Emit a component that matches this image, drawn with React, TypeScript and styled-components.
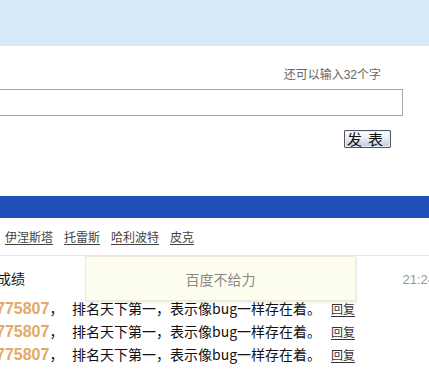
import React from "react";
import styled, { createGlobalStyle } from "styled-components";

const GlobalStyle = createGlobalStyle`
  html, body {
    margin: 0;
    padding: 0;
    background: #ffffff;
    overflow: hidden;
  }
  body {
    font-family: "Liberation Sans", Arial, "Noto Sans CJK SC", sans-serif;
    color: #222;
  }
`;

const Page = styled.div`
  width: 429px;
  height: 370px;
  overflow: hidden;
  display: flex;
  flex-direction: column;
`;

const Header = styled.div`
  height: 46px;
  background: #d6e9f8;
  flex: none;
`;

const Compose = styled.div`
  display: flex;
  flex-direction: column;
  align-items: flex-end;
  padding-top: 21px;
`;

const Counter = styled.div`
  font-size: 12px;
  line-height: 16px;
  color: #666;
  margin-right: 48px;
  font-family: "Liberation Sans", "Noto Sans CJK SC", sans-serif;
`;

const InputBox = styled.div`
  align-self: stretch;
  margin-top: 6px;
  margin-right: 26px;
  height: 25px;
  border: 1px solid #a8a8a8;
  border-left: none;
  background: #fff;
`;

const PostButton = styled.button`
  margin-top: 14px;
  margin-right: 38px;
  width: 47px;
  height: 18px;
  padding: 0 0 0 2px;
  display: flex;
  align-items: center;
  justify-content: flex-start;
  gap: 6px;
  border: 1px solid #4d5866;
  border-radius: 1px;
  background: linear-gradient(#ffffff 0%, #edf1f8 40%, #bccbe2 100%);
  font-family: "Noto Sans CJK SC", sans-serif;
  font-size: 15px;
  line-height: 16px;
  color: #111;
  white-space: nowrap;
  box-shadow: inset 0 0 0 1px #e8edf6;
`;

const BlueBar = styled.div`
  margin-top: 48px;
  height: 22px;
  background: #2250bb;
  flex: none;
`;

const HotLinks = styled.div`
  display: flex;
  gap: 11px;
  padding: 11px 0 10px 5px;
  border-bottom: 1px solid #e8e8e8;
`;

const HotLink = styled.a`
  font-family: "Noto Sans CJK SC", sans-serif;
  font-size: 12px;
  line-height: 16px;
  color: #444;
  text-decoration: underline;
  text-underline-offset: 2px;
`;

const List = styled.div`
  position: relative;
  padding-top: 11px;
`;

const TitleRow = styled.div`
  display: flex;
  justify-content: space-between;
  align-items: baseline;
  margin-left: -3px;
  margin-right: -6px;
`;

const Title = styled.span`
  font-family: "Noto Sans CJK SC", sans-serif;
  font-size: 14px;
  line-height: 22px;
  color: #111;
`;

const Time = styled.span`
  font-size: 13px;
  color: #999;
`;

const Rows = styled.div`
  margin-top: 8px;
  display: flex;
  flex-direction: column;
`;

const Row = styled.div`
  display: grid;
  grid-template-columns: 72px 259px auto;
  align-items: baseline;
  line-height: 22px;
`;

const Who = styled.span`
  margin-left: -4px;
  white-space: nowrap;
`;

const Num = styled.span`
  font-size: 16px;
  font-weight: bold;
  color: #e4a867;
`;

const Comma = styled.span`
  font-family: "Noto Sans CJK SC", sans-serif;
  font-size: 14px;
  color: #111;
`;

const Msg = styled.span`
  font-family: "Noto Sans CJK SC", sans-serif;
  font-size: 14px;
  color: #111;
  white-space: nowrap;
`;

const Reply = styled.a`
  font-family: "Noto Sans CJK SC", sans-serif;
  font-size: 12px;
  color: #333;
  text-decoration: underline;
  text-underline-offset: 2px;
`;

const Tip = styled.div`
  position: absolute;
  left: 85px;
  top: 0;
  width: 269px;
  height: 43px;
  background: #fdfdf0;
  border: 1px solid #ecebdb;
  box-shadow: 1px 2px 2px rgba(0, 0, 0, 0.08);
  display: flex;
  align-items: center;
  justify-content: center;
  font-family: "Noto Sans CJK SC", sans-serif;
  font-size: 14px;
  color: #888;
`;

const links = ["伊涅斯塔", "托雷斯", "哈利波特", "皮克"];

export default function App() {
  return (
    <>
      <GlobalStyle />
      <Page>
        <Header />
        <Compose>
          <Counter>还可以输入32个字</Counter>
          <InputBox />
          <PostButton>
            <span>发</span>
            <span>表</span>
          </PostButton>
        </Compose>
        <BlueBar />
        <HotLinks>
          {links.map((l) => (
            <HotLink key={l}>{l}</HotLink>
          ))}
        </HotLinks>
        <List>
          <TitleRow>
            <Title>成绩</Title>
            <Time>21:24</Time>
          </TitleRow>
          <Rows>
            {[0, 1, 2].map((i) => (
              <Row key={i}>
                <Who>
                  <Num>775807</Num>
                  <Comma>，</Comma>
                </Who>
                <Msg>排名天下第一，表示像bug一样存在着。</Msg>
                <Reply>回复</Reply>
              </Row>
            ))}
          </Rows>
          <Tip>百度不给力</Tip>
        </List>
      </Page>
    </>
  );
}
